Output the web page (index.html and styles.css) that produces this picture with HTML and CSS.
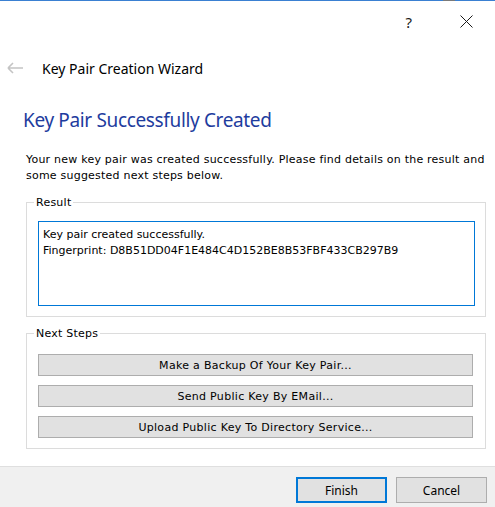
FILE: index.html
```html
<!DOCTYPE html>
<html lang="en">
<head>
<meta charset="utf-8">
<title>Key Pair Creation Wizard</title>
<link rel="stylesheet" href="styles.css">
</head>
<body>
<div class="window">
  <div class="titlebar">
    <span class="edge-thumb"></span>
    <span class="tb-btn help">?</span>
    <span class="tb-btn close">
      <svg width="13" height="13" viewBox="0 0 13 13"><path d="M0.5 0.5 L12.5 12.5 M12.5 0.5 L0.5 12.5" stroke="#1a1a1a" stroke-width="1" fill="none"/></svg>
    </span>
  </div>
  <div class="header">
    <svg class="back" width="17" height="12" viewBox="0 0 17 12"><path d="M1 6 H16 M1 6 L6 1 M1 6 L6 11" stroke="#c4c4c4" stroke-width="1.6" fill="none"/></svg>
    <span class="header-title">Key Pair Creation Wizard</span>
  </div>
  <main class="content">
    <h1 class="page-title">Key Pair Successfully Created</h1>
    <p class="intro">Your new key pair was created successfully. Please find details on the result and some suggested next steps below.</p>
    <fieldset class="group result">
      <legend>Result</legend>
      <div class="textbox">Key pair created successfully.<br>Fingerprint: D8B51DD04F1E484C4D152BE8B53FBF433CB297B9</div>
    </fieldset>
    <fieldset class="group steps">
      <legend>Next Steps</legend>
      <button class="step-btn">Make a Backup Of Your Key Pair...</button>
      <button class="step-btn">Send Public Key By EMail...</button>
      <button class="step-btn">Upload Public Key To Directory Service...</button>
    </fieldset>
  </main>
  <footer class="footer">
    <button class="dlg-btn default">Finish</button>
    <button class="dlg-btn">Cancel</button>
  </footer>
</div>
</body>
</html>
```
FILE: styles.css
```css
* { box-sizing: border-box; }
html, body { margin: 0; padding: 0; background: #fff; }
body { width: 495px; height: 507px; overflow: hidden; }

.window {
  height: 507px;
  display: flex;
  flex-direction: column;
  font-family: "DejaVu Sans", sans-serif;
  font-size: 11px;
  color: #000;
}

.titlebar {
  position: relative;
  height: 42px;
  border-top: 1px solid #3a80d2;
  display: flex;
  justify-content: flex-end;
  align-items: center;
  padding-right: 22px;
}
.edge-thumb {
  position: absolute;
  top: -1px;
  left: 443px;
  width: 12px;
  height: 1px;
  background: #7a7a7a;
}
.tb-btn {
  display: flex;
  align-items: center;
  justify-content: center;
  font-family: "Noto Sans", sans-serif;
  font-size: 15px;
  color: #1a1a1a;
}
.help { margin-right: 48px; }
.close svg { display: block; }

.header {
  height: 52px;
  display: flex;
  align-items: center;
  padding-left: 7px;
}
.back { display: block; margin-right: 18px; }
.header-title {
  font-family: "Noto Sans", sans-serif;
  font-size: 14px;
  color: #000;
}

.content {
  padding: 0 9px 0 26px;
  flex: 1;
}
.page-title {
  margin: 12px 0 0 -3px;
  font-family: "Noto Sans", sans-serif;
  font-weight: normal;
  font-size: 19px;
  letter-spacing: -0.35px;
  line-height: 28px;
  color: #1e3c9e;
}
.intro {
  margin: 18px -9px 0 0;
  line-height: 16px;
  letter-spacing: 0.22px;
}

.group {
  margin: 0;
  min-width: 0;
  border: 1px solid #dcdcdc;
  padding: 0 10px 0 11px;
}
.group legend {
  margin-left: -4px;
  padding: 0 2px;
  height: 15px;
  line-height: 15px;
  letter-spacing: 0.24px;
}
.result {
  margin-top: 11px;
  padding-top: 11px;
  padding-bottom: 10px;
}
.textbox {
  height: 85px;
  border: 1px solid #0078d7;
  padding: 5px 4px 3px;
  line-height: 16px;
  background: #fff;
}
.steps {
  margin-top: 9px;
  padding-top: 13px;
  padding-bottom: 10px;
  display: flex;
  flex-direction: column;
  gap: 9px;
}
.step-btn, .dlg-btn {
  font: inherit;
  color: #000;
  background: #e1e1e1;
  border: 1px solid #adadad;
  margin: 0;
  padding: 0;
}
.step-btn {
  height: 22px;
  width: 435px;
  letter-spacing: 0.3px;
}

.footer {
  height: 41px;
  border-top: 1px solid #dfdfdf;
  background: #f0f0f0;
  display: flex;
  justify-content: flex-end;
  align-items: flex-start;
  gap: 9px;
  padding: 10px 8px 0 0;
}
.dlg-btn {
  width: 91px;
  height: 26px;
  font-family: "Noto Sans", sans-serif;
  font-size: 12px;
}
.dlg-btn.default { border: 2px solid #0078d7; }
```
